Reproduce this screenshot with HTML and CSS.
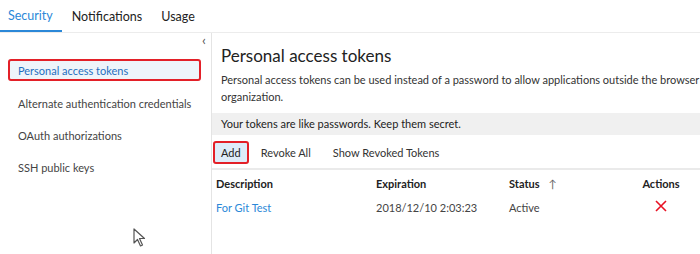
FILE: index.html
```html
<!DOCTYPE html>
<html lang="en">
<head>
    <meta charset="UTF-8">
    <title>Security</title>
    <link rel="stylesheet" href="styles.css">
</head>
<body>

    <!-- Top tabs -->
    <div class="tabs">
        <span class="tab active">Security</span>
        <span class="tab">Notifications</span>
        <span class="tab">Usage</span>
    </div>

    <div class="layout">
        <div class="sidebar">
            <div class="collapse">&#8249;</div>
            <div class="nav-item selected">Personal access tokens</div>
            <div class="nav-item">Alternate authentication credentials</div>
            <div class="nav-item">OAuth authorizations</div>
            <div class="nav-item">SSH public keys</div>
            <svg class="cursor" width="14" height="20" viewBox="0 0 14 20">
                <path d="M1 1 L1 15 L4.5 11.5 L7.5 18 L9.5 17 L6.5 10.5 L11.5 10.5 Z" fill="#fff" stroke="#555" stroke-width="1.2" stroke-linejoin="round"/>
            </svg>
        </div>

        <div class="main">
            <h2>Personal access tokens</h2>
            <p class="desc">Personal access tokens can be used instead of a password to allow applications outside the browser access to your<br>organization.</p>
            <div class="banner">Your tokens are like passwords. Keep them secret.</div>

            <div class="toolbar">
                <span class="btn add">Add</span>
                <span class="btn">Revoke All</span>
                <span class="btn">Show Revoked Tokens</span>
            </div>

            <div class="grid head">
                <span>Description</span>
                <span>Expiration</span>
                <span>Status <span class="sort">&#8593;</span></span>
                <span class="center">Actions</span>
            </div>
            <div class="grid row">
                <span class="link">For Git Test</span>
                <span>2018/12/10 2:03:23</span>
                <span>Active</span>
                <span class="center">
                    <svg width="12" height="12" viewBox="0 0 12 12">
                        <path d="M1 1 L11 11 M11 1 L1 11" stroke="#e81123" stroke-width="1.6"/>
                    </svg>
                </span>
            </div>
        </div>
    </div>

</body>
</html>
```

FILE: styles.css
```css
* {
    margin: 0;
    padding: 0;
    box-sizing: border-box;
}

body {
    font-family: Lato, "Noto Sans", sans-serif;
    font-size: 11px;
    color: #333;
    background: #fff;
    width: 700px;
    height: 254px;
    overflow: hidden;
}

/* Tabs */
.tabs {
    display: flex;
    height: 33px;
    border-bottom: 1px solid #ececec;
}

.tab {
    font-size: 12.5px;
    color: #222;
    padding: 0 9px;
    line-height: 33px;
    margin-right: 1px;
}

.tab:first-child {
    padding-left: 8px;
}

.tab.active {
    color: #2b88d8;
    border-bottom: 2px solid #2b88d8;
    line-height: 31px;
}

/* Body layout */
.layout {
    display: flex;
    height: 221px;
}

.sidebar {
    width: 212px;
    border-right: 1px solid #e4e4e4;
    position: relative;
    padding: 26px 10px 0 8px;
}

.collapse {
    position: absolute;
    top: -2px;
    right: 5px;
    font-size: 14px;
    color: #555;
}

.nav-item {
    height: 22px;
    line-height: 20px;
    padding-left: 8px;
    margin-bottom: 10px;
    color: #444;
    white-space: nowrap;
    border: 2px solid transparent;
}

.nav-item.selected {
    color: #1f6fbf;
    background: #eef4fa;
    border-color: #e32028;
    border-radius: 3px;
    margin-bottom: 11px;
}

.cursor {
    position: absolute;
    left: 133px;
    top: 195px;
}

/* Main content */
.main {
    flex: 1;
    padding-left: 8px;
    overflow: hidden;
}

h2 {
    font-size: 17px;
    font-weight: normal;
    color: #222;
    padding: 12px 0 0 1px;
    margin-bottom: 5px;
}

.desc {
    white-space: nowrap;
    line-height: 17px;
    color: #333;
    padding-left: 1px;
    margin-bottom: 8px;
}

.banner {
    background: #f0f0f0;
    height: 22px;
    line-height: 22px;
    padding-left: 9px;
    margin-left: -8px;
    color: #222;
}

.toolbar {
    display: flex;
    align-items: center;
    height: 35px;
    border-bottom: 2px solid #eaeaea;
    margin-left: -8px;
    padding-top: 2px;
}

.btn {
    padding: 0 11px;
    line-height: 22px;
    color: #333;
}

.btn.add {
    padding: 0 6px;
    margin-left: 1px;
    margin-right: 1px;
    background: #deecf9;
    border: 2px solid #e32028;
    border-radius: 3px;
    line-height: 19px;
    color: #222;
}

.grid {
    display: grid;
    grid-template-columns: 160px 133px 117px 70px;
    align-items: center;
    margin-left: -4px;
}

.head {
    height: 26px;
    font-weight: bold;
    color: #222;
}

.row {
    height: 22px;
    color: #444;
}

.sort {
    font-weight: normal;
    color: #666;
    margin-left: 6px;
}

.center {
    text-align: center;
}

.link {
    color: #2b88d8;
}
```
